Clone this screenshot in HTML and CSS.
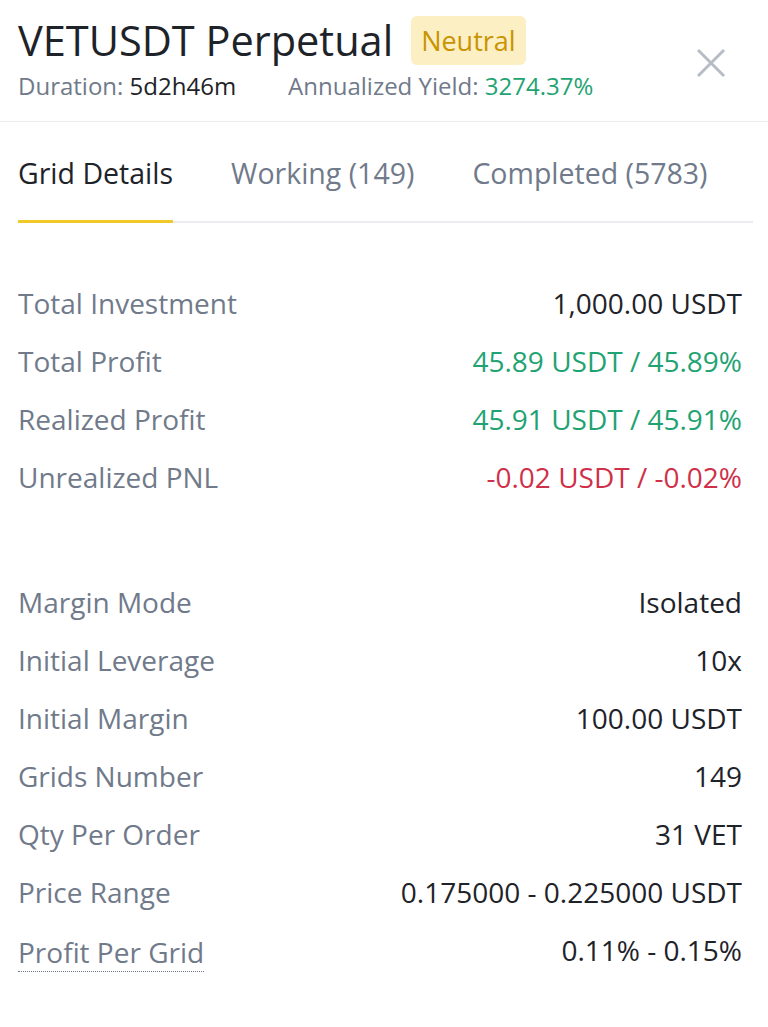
FILE: index.html
```html
<!DOCTYPE html>
<html lang="en">
<head>
    <meta charset="UTF-8" />
    <title>VETUSDT Perpetual | Grid Details</title>
    <link rel="stylesheet" href="styles.css">
</head>
<body>
    <!-- Header -->
    <header class="top">
        <div class="top-info">
            <div class="title-row">
                <h1>VETUSDT Perpetual</h1>
                <span class="badge">Neutral</span>
            </div>
            <div class="meta-row">
                <span class="meta"><span class="meta-label">Duration:</span> <b>5d2h46m</b></span>
                <span class="meta"><span class="meta-label">Annualized Yield:</span> <b class="up">3274.37%</b></span>
            </div>
        </div>
        <svg class="close" width="32" height="32" viewBox="0 0 32 32">
            <path d="M3 3 L29 29 M29 3 L3 29" stroke="#b7bdc6" stroke-width="3" fill="none" />
        </svg>
    </header>

    <!-- Tabs -->
    <nav class="tabs">
        <a class="tab active">Grid Details</a>
        <a class="tab">Working (149)</a>
        <a class="tab">Completed (5783)</a>
    </nav>

    <!-- Profit block -->
    <section class="rows">
        <div class="row"><span class="label">Total Investment</span><span class="value">1,000.00 USDT</span></div>
        <div class="row"><span class="label">Total Profit</span><span class="value up">45.89 USDT / 45.89%</span></div>
        <div class="row"><span class="label">Realized Profit</span><span class="value up">45.91 USDT / 45.91%</span></div>
        <div class="row"><span class="label">Unrealized PNL</span><span class="value down">-0.02 USDT / -0.02%</span></div>
    </section>

    <!-- Settings block -->
    <section class="rows rows-second">
        <div class="row"><span class="label">Margin Mode</span><span class="value">Isolated</span></div>
        <div class="row"><span class="label">Initial Leverage</span><span class="value">10x</span></div>
        <div class="row"><span class="label">Initial Margin</span><span class="value">100.00 USDT</span></div>
        <div class="row"><span class="label">Grids Number</span><span class="value">149</span></div>
        <div class="row"><span class="label">Qty Per Order</span><span class="value">31 VET</span></div>
        <div class="row"><span class="label">Price Range</span><span class="value">0.175000 - 0.225000 USDT</span></div>
        <div class="row"><span class="label dotted">Profit Per Grid</span><span class="value">0.11% - 0.15%</span></div>
    </section>
</body>
</html>
```

FILE: styles.css
```css
body {
    font-family: "Open Sans", Roboto, Arial, sans-serif;
    background-color: #fff;
    color: #1e2329;
    margin: 0;
    padding: 0;
}

/* --- header --- */
.top {
    display: flex;
    justify-content: space-between;
    align-items: flex-start;
    padding: 12px 41px 0 18px;
    height: 122px;
    box-sizing: border-box;
    border-bottom: 1px solid #eaecef;
}

.title-row {
    display: flex;
    align-items: center;
    gap: 18px;
}

h1 {
    font-size: 41.5px;
    font-weight: 500;
    margin: 0;
    line-height: 57px;
}

.badge {
    background: #fcefc4;
    color: #c99400;
    font-size: 27px;
    padding: 0 10px;
    height: 49px;
    line-height: 49px;
    border-radius: 6px;
}

.meta-row {
    display: flex;
    gap: 52px;
    font-size: 24px;
    line-height: 33px;
}

.meta-label {
    color: #707a8a;
}

.meta b {
    font-weight: 500;
}

.close {
    margin-top: 35px;
}

/* --- tabs --- */
.tabs {
    display: flex;
    gap: 58px;
    margin: 0 15px 0 18px;
    border-bottom: 2px solid #eaecef;
    padding-top: 30px;
}

.tab {
    font-size: 28.5px;
    color: #707a8a;
    padding-bottom: 26px;
    line-height: 42px;
}

.tab.active {
    color: #1e2329;
    border-bottom: 3px solid #f0c929;
    margin-bottom: -2px;
}

/* --- rows --- */
.rows {
    padding: 51px 26px 0 18px;
}

.rows-second {
    padding-top: 67px;
}

.row {
    display: flex;
    justify-content: space-between;
    align-items: center;
    height: 58px;
    font-size: 28px;
}

.label {
    color: #707a8a;
}

.label.dotted {
    border-bottom: 1px dotted #707a8a;
    line-height: 38px;
    margin-top: 4px;
}

.up {
    color: #1fa372;
}

.down {
    color: #cf304a;
}
```
